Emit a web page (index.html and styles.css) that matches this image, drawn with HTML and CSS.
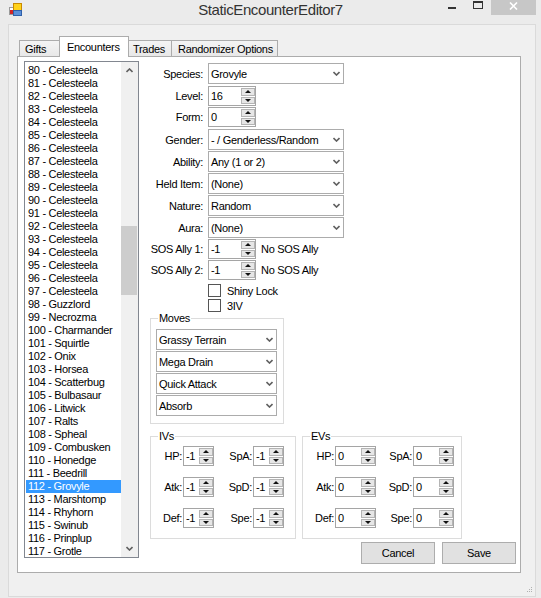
FILE: index.html
```html
<!DOCTYPE html>
<html lang="en">
<head>
  <meta charset="UTF-8">
  <title>StaticEncounterEditor7</title>
  <link rel="stylesheet" href="styles.css">
</head>
<body>
  <div class="titlebar">
    <div class="title-left">
      <svg class="app-icon" width="13" height="13" viewBox="0 0 13 13">
        <rect x="0.5" y="4.5" width="4" height="7" fill="#fff" stroke="#9a9a9a"/>
        <rect x="1" y="7" width="3" height="4" fill="#d42424"/>
        <rect x="4.5" y="0.5" width="8" height="7" fill="#ffd21a" stroke="#c98a00"/>
        <rect x="4.5" y="7.5" width="8" height="5" fill="#5b8fd8" stroke="#2f5fa8"/>
      </svg>
    </div>
    <div class="title">StaticEncounterEditor7</div>
    <div class="caption">
      <div class="cap-btn cap-min"><span class="min-glyph"></span></div>
      <div class="cap-btn cap-max"><span class="max-glyph"></span></div>
      <div class="cap-btn cap-close">
        <svg width="9" height="8" viewBox="0 0 9 8">
          <path d="M1 0.5 L8 7.5 M8 0.5 L1 7.5" stroke="#fff" stroke-width="1.6"/>
        </svg>
      </div>
    </div>
  </div>

  <div class="client">
    <div class="tabs">
      <div class="tab tab-gifts">Gifts</div>
      <div class="tab tab-encounters active">Encounters</div>
      <div class="tab tab-trades">Trades</div>
      <div class="tab tab-random">Randomizer Options</div>
    </div>

    <div class="tab-page">
      <div class="listbox">
        <div class="list-items">
          <div class="item">80 - Celesteela</div>
          <div class="item">81 - Celesteela</div>
          <div class="item">82 - Celesteela</div>
          <div class="item">83 - Celesteela</div>
          <div class="item">84 - Celesteela</div>
          <div class="item">85 - Celesteela</div>
          <div class="item">86 - Celesteela</div>
          <div class="item">87 - Celesteela</div>
          <div class="item">88 - Celesteela</div>
          <div class="item">89 - Celesteela</div>
          <div class="item">90 - Celesteela</div>
          <div class="item">91 - Celesteela</div>
          <div class="item">92 - Celesteela</div>
          <div class="item">93 - Celesteela</div>
          <div class="item">94 - Celesteela</div>
          <div class="item">95 - Celesteela</div>
          <div class="item">96 - Celesteela</div>
          <div class="item">97 - Celesteela</div>
          <div class="item">98 - Guzzlord</div>
          <div class="item">99 - Necrozma</div>
          <div class="item">100 - Charmander</div>
          <div class="item">101 - Squirtle</div>
          <div class="item">102 - Onix</div>
          <div class="item">103 - Horsea</div>
          <div class="item">104 - Scatterbug</div>
          <div class="item">105 - Bulbasaur</div>
          <div class="item">106 - Litwick</div>
          <div class="item">107 - Ralts</div>
          <div class="item">108 - Spheal</div>
          <div class="item">109 - Combusken</div>
          <div class="item">110 - Honedge</div>
          <div class="item">111 - Beedrill</div>
          <div class="item selected">112 - Grovyle</div>
          <div class="item">113 - Marshtomp</div>
          <div class="item">114 - Rhyhorn</div>
          <div class="item">115 - Swinub</div>
          <div class="item">116 - Prinplup</div>
          <div class="item">117 - Grotle</div>
        </div>
        <div class="scrollbar">
          <div class="scroll-arrow">
            <svg width="7" height="5" viewBox="0 0 7 5"><polyline points="0.5,4 3.5,1 6.5,4" fill="none" stroke="#606060" stroke-width="1.6"/></svg>
          </div>
          <div class="scroll-track"><div class="scroll-thumb"></div></div>
          <div class="scroll-arrow">
            <svg width="7" height="5" viewBox="0 0 7 5"><polyline points="0.5,1 3.5,4 6.5,1" fill="none" stroke="#606060" stroke-width="1.6"/></svg>
          </div>
        </div>
      </div>

      <div class="editor">
        <div class="field row-species">
          <div class="field-label">Species:</div>
          <div class="combo wide"><span>Grovyle</span><svg class="chev" width="7" height="5" viewBox="0 0 7 5"><polyline points="0.5,1 3.5,4 6.5,1" fill="none" stroke="#606060" stroke-width="1.6"/></svg></div>
        </div>
        <div class="field row-level">
          <div class="field-label">Level:</div>
          <div class="numeric num-form"><span class="num-text">16</span><div class="spin"><div class="spin-btn"><i class="up"></i></div><div class="spin-btn"><i class="down"></i></div></div></div>
        </div>
        <div class="field row-form">
          <div class="field-label">Form:</div>
          <div class="numeric num-form"><span class="num-text">0</span><div class="spin"><div class="spin-btn"><i class="up"></i></div><div class="spin-btn"><i class="down"></i></div></div></div>
        </div>
        <div class="field row-gender">
          <div class="field-label">Gender:</div>
          <div class="combo wide"><span>- / Genderless/Random</span><svg class="chev" width="7" height="5" viewBox="0 0 7 5"><polyline points="0.5,1 3.5,4 6.5,1" fill="none" stroke="#606060" stroke-width="1.6"/></svg></div>
        </div>
        <div class="field row-next">
          <div class="field-label">Ability:</div>
          <div class="combo wide"><span>Any (1 or 2)</span><svg class="chev" width="7" height="5" viewBox="0 0 7 5"><polyline points="0.5,1 3.5,4 6.5,1" fill="none" stroke="#606060" stroke-width="1.6"/></svg></div>
        </div>
        <div class="field row-next">
          <div class="field-label">Held Item:</div>
          <div class="combo wide"><span>(None)</span><svg class="chev" width="7" height="5" viewBox="0 0 7 5"><polyline points="0.5,1 3.5,4 6.5,1" fill="none" stroke="#606060" stroke-width="1.6"/></svg></div>
        </div>
        <div class="field row-next">
          <div class="field-label">Nature:</div>
          <div class="combo wide"><span>Random</span><svg class="chev" width="7" height="5" viewBox="0 0 7 5"><polyline points="0.5,1 3.5,4 6.5,1" fill="none" stroke="#606060" stroke-width="1.6"/></svg></div>
        </div>
        <div class="field row-next">
          <div class="field-label">Aura:</div>
          <div class="combo wide"><span>(None)</span><svg class="chev" width="7" height="5" viewBox="0 0 7 5"><polyline points="0.5,1 3.5,4 6.5,1" fill="none" stroke="#606060" stroke-width="1.6"/></svg></div>
        </div>
        <div class="field row-sos1">
          <div class="field-label">SOS Ally 1:</div>
          <div class="numeric num-form"><span class="num-text">-1</span><div class="spin"><div class="spin-btn"><i class="up"></i></div><div class="spin-btn"><i class="down"></i></div></div></div>
          <span class="sos-name">No SOS Ally</span>
        </div>
        <div class="field row-next">
          <div class="field-label">SOS Ally 2:</div>
          <div class="numeric num-form"><span class="num-text">-1</span><div class="spin"><div class="spin-btn"><i class="up"></i></div><div class="spin-btn"><i class="down"></i></div></div></div>
          <span class="sos-name">No SOS Ally</span>
        </div>
        <div class="check-row row-shiny"><span class="checkbox"></span><span class="check-text">Shiny Lock</span></div>
        <div class="check-row"><span class="checkbox"></span><span class="check-text">3IV</span></div>

        <fieldset class="group moves">
          <legend>Moves</legend>
          <div class="combo move"><span>Grassy Terrain</span><svg class="chev" width="7" height="5" viewBox="0 0 7 5"><polyline points="0.5,1 3.5,4 6.5,1" fill="none" stroke="#606060" stroke-width="1.6"/></svg></div>
          <div class="combo move"><span>Mega Drain</span><svg class="chev" width="7" height="5" viewBox="0 0 7 5"><polyline points="0.5,1 3.5,4 6.5,1" fill="none" stroke="#606060" stroke-width="1.6"/></svg></div>
          <div class="combo move"><span>Quick Attack</span><svg class="chev" width="7" height="5" viewBox="0 0 7 5"><polyline points="0.5,1 3.5,4 6.5,1" fill="none" stroke="#606060" stroke-width="1.6"/></svg></div>
          <div class="combo move"><span>Absorb</span><svg class="chev" width="7" height="5" viewBox="0 0 7 5"><polyline points="0.5,1 3.5,4 6.5,1" fill="none" stroke="#606060" stroke-width="1.6"/></svg></div>
        </fieldset>

        <div class="stats-row">
          <fieldset class="group ivs">
            <legend>IVs</legend>
            <div class="stat-grid iv-grid">
              <div class="stat-label">HP:</div>
              <div class="numeric"><span class="num-text">-1</span><div class="spin"><div class="spin-btn"><i class="up"></i></div><div class="spin-btn"><i class="down"></i></div></div></div>
              <div class="stat-label">SpA:</div>
              <div class="numeric"><span class="num-text">-1</span><div class="spin"><div class="spin-btn"><i class="up"></i></div><div class="spin-btn"><i class="down"></i></div></div></div>
              <div class="stat-label">Atk:</div>
              <div class="numeric"><span class="num-text">-1</span><div class="spin"><div class="spin-btn"><i class="up"></i></div><div class="spin-btn"><i class="down"></i></div></div></div>
              <div class="stat-label">SpD:</div>
              <div class="numeric"><span class="num-text">-1</span><div class="spin"><div class="spin-btn"><i class="up"></i></div><div class="spin-btn"><i class="down"></i></div></div></div>
              <div class="stat-label">Def:</div>
              <div class="numeric"><span class="num-text">-1</span><div class="spin"><div class="spin-btn"><i class="up"></i></div><div class="spin-btn"><i class="down"></i></div></div></div>
              <div class="stat-label">Spe:</div>
              <div class="numeric"><span class="num-text">-1</span><div class="spin"><div class="spin-btn"><i class="up"></i></div><div class="spin-btn"><i class="down"></i></div></div></div>
            </div>
          </fieldset>
          <fieldset class="group evs">
            <legend>EVs</legend>
            <div class="stat-grid ev-grid">
              <div class="stat-label">HP:</div>
              <div class="numeric"><span class="num-text">0</span><div class="spin"><div class="spin-btn"><i class="up"></i></div><div class="spin-btn"><i class="down"></i></div></div></div>
              <div class="stat-label">SpA:</div>
              <div class="numeric"><span class="num-text">0</span><div class="spin"><div class="spin-btn"><i class="up"></i></div><div class="spin-btn"><i class="down"></i></div></div></div>
              <div class="stat-label">Atk:</div>
              <div class="numeric"><span class="num-text">0</span><div class="spin"><div class="spin-btn"><i class="up"></i></div><div class="spin-btn"><i class="down"></i></div></div></div>
              <div class="stat-label">SpD:</div>
              <div class="numeric"><span class="num-text">0</span><div class="spin"><div class="spin-btn"><i class="up"></i></div><div class="spin-btn"><i class="down"></i></div></div></div>
              <div class="stat-label">Def:</div>
              <div class="numeric"><span class="num-text">0</span><div class="spin"><div class="spin-btn"><i class="up"></i></div><div class="spin-btn"><i class="down"></i></div></div></div>
              <div class="stat-label">Spe:</div>
              <div class="numeric"><span class="num-text">0</span><div class="spin"><div class="spin-btn"><i class="up"></i></div><div class="spin-btn"><i class="down"></i></div></div></div>
            </div>
          </fieldset>
        </div>

        <div class="actions">
          <button class="win-btn">Cancel</button>
          <button class="win-btn">Save</button>
        </div>
      </div>
    </div>

    <div class="statusbar">
      <svg class="grip" width="7" height="7" viewBox="0 0 7 7">
        <rect x="5" y="0" width="1" height="1" fill="#b0b0b0"/>
        <rect x="3" y="2" width="1" height="1" fill="#b0b0b0"/>
        <rect x="5" y="2" width="1" height="1" fill="#b0b0b0"/>
        <rect x="1" y="4" width="1" height="1" fill="#b0b0b0"/>
        <rect x="3" y="4" width="1" height="1" fill="#b0b0b0"/>
        <rect x="5" y="4" width="1" height="1" fill="#b0b0b0"/>
      </svg>
    </div>
  </div>
</body>
</html>
```

FILE: styles.css
```css
* {
  box-sizing: border-box;
}
body {
  margin: 0;
  width: 541px;
  height: 598px;
  overflow: hidden;
  background-color: #ebebeb;
  font-family: "Liberation Sans", Arial, sans-serif;
  font-size: 11px;
  letter-spacing: -0.3px;
  color: #000;
}

/* window title bar */
.titlebar {
  height: 24px;
  display: grid;
  grid-template-columns: 1fr auto 1fr;
}
.app-icon {
  display: block;
  margin: 3px 0 0 9px;
}
.title {
  font-size: 15px;
  letter-spacing: -0.4px;
  line-height: 20px;
  color: #333;
}
.caption {
  display: flex;
  justify-content: flex-end;
  align-items: flex-start;
  padding-right: 5px;
}
.cap-btn {
  width: 26px;
  height: 16px;
  display: flex;
  justify-content: center;
  align-items: flex-start;
}
.min-glyph {
  width: 8px;
  height: 2px;
  margin-top: 7px;
  background: #333;
}
.max-glyph {
  width: 10px;
  height: 8px;
  margin-top: 1px;
  border: 1px solid #333;
  border-top-width: 2px;
}
.cap-close {
  width: 45px;
  height: 15px;
  background: #c7c7c7;
  padding-top: 2px;
}

/* client area */
.client {
  margin-left: 8px;
  width: 528px;
  height: 573px;
  background: #f0f0f0;
  border: 1px solid #dadada;
  padding: 11px 0 0 8px;
}
.tabs {
  display: flex;
  align-items: flex-end;
  height: 20px;
  margin-left: 2px;
}
.tab {
  height: 16px;
  border: 1px solid #acacac;
  border-bottom: none;
  background: linear-gradient(#f4f4f4, #e8e8e8);
  padding-top: 2px;
  line-height: 13px;
  margin-right: -1px;
  white-space: nowrap;
}
.tab-gifts {
  width: 41px;
  padding-left: 5px;
}
.tab-encounters {
  width: 70px;
  padding-left: 7px;
}
.tab-trades {
  width: 44px;
  padding-left: 4px;
}
.tab-random {
  width: 107px;
  padding-left: 6px;
}
.tab.active {
  height: 21px;
  margin-bottom: -1px;
  padding-top: 4px;
  background: #fff;
  position: relative;
  z-index: 1;
}
.tab-page {
  width: 504px;
  height: 517px;
  border: 1px solid #acacac;
  background: #fff;
  display: flex;
}

/* species list */
.listbox {
  margin: 4px 0 0 6px;
  width: 115px;
  height: 497px;
  border: 1px solid #828790;
  display: flex;
}
.list-items {
  flex: 1;
  padding-top: 2px;
  overflow: hidden;
}
.item {
  height: 13px;
  line-height: 13px;
  margin-left: 1px;
  padding-left: 2px;
  white-space: nowrap;
}
.item.selected {
  background: #3399ff;
  color: #fff;
}
.scrollbar {
  width: 17px;
  background: #f0f0f0;
  display: flex;
  flex-direction: column;
}
.scroll-arrow {
  height: 17px;
  display: flex;
  justify-content: center;
  align-items: center;
}
.scroll-track {
  flex: 1;
}
.scroll-thumb {
  margin: 147px 0 0 0;
  width: 16px;
  height: 69px;
  background: #cdcdcd;
}

/* editor fields */
.editor {
  flex: 1;
  display: flex;
  flex-direction: column;
}
.field {
  display: flex;
  align-items: center;
}
.row-species {
  margin-top: 6px;
}
.row-level,
.row-gender {
  margin-top: 2px;
}
.row-form,
.row-next {
  margin-top: 1px;
}
.row-sos1 {
  margin-top: 1px;
}
.field-label {
  width: 64px;
  margin-right: 5px;
  text-align: right;
  white-space: nowrap;
}
.combo {
  height: 21px;
  display: flex;
  align-items: center;
  justify-content: space-between;
  border: 1px solid #acacac;
  background: #fff;
  padding: 0 3px 0 2px;
  white-space: nowrap;
}
.combo.wide {
  width: 136px;
}
.chev {
  display: block;
}
.numeric {
  height: 20px;
  display: flex;
  border: 1px solid #a5a5a5;
  background: #fff;
}
.num-form {
  width: 48px;
}
.num-text {
  flex: 1;
  padding-left: 2px;
  line-height: 18px;
}
.spin {
  width: 14px;
  margin: 1px 0 1px 0;
  display: flex;
  flex-direction: column;
  gap: 1px;
}
.spin-btn {
  flex: 1;
  background: #e6e6e6;
  border: 1px solid #b4b4b4;
  display: flex;
  justify-content: center;
  align-items: center;
}
.spin-btn i {
  width: 0;
  height: 0;
  border-left: 3px solid transparent;
  border-right: 3px solid transparent;
}
.spin-btn .up {
  border-bottom: 3px solid #111;
}
.spin-btn .down {
  border-top: 3px solid #111;
}
.sos-name {
  margin-left: 5px;
  white-space: nowrap;
}
.check-row {
  height: 15px;
  margin-left: 69px;
  display: flex;
  align-items: center;
}
.row-shiny {
  margin-top: 3px;
}
.checkbox {
  width: 13px;
  height: 13px;
  border: 1px solid #555;
  background: #fff;
}
.check-text {
  margin-left: 6px;
  padding-top: 1px;
}

/* group boxes */
.group {
  margin: 0;
  border: 1px solid #dcdcdc;
  min-width: 0;
}
.group legend {
  padding: 0 1px;
  margin-left: 2px;
  line-height: 13px;
}
.moves {
  margin: -1px 0 0 11px;
  width: 134px;
  padding: 4px 6px 6px 5px;
}
.combo.move {
  width: 121px;
  margin-bottom: 1px;
}
.stats-row {
  display: flex;
  gap: 6px;
  margin: 6px 0 0 11px;
}
.ivs {
  width: 146px;
  padding: 3px 5px 10px 5px;
}
.evs {
  width: 160px;
  padding: 3px 7px 10px 5px;
}
.stat-grid {
  display: grid;
  grid-auto-rows: 20px;
  row-gap: 11px;
  align-items: center;
}
.iv-grid {
  grid-template-columns: 27px 31px 39px 31px;
}
.ev-grid {
  grid-template-columns: 27px 41px 37px 41px;
}
.stat-label {
  text-align: right;
  padding-right: 1px;
}

/* buttons */
.actions {
  display: flex;
  justify-content: flex-end;
  gap: 7px;
  margin-top: 3px;
  padding-right: 4px;
}
.win-btn {
  width: 74px;
  height: 22px;
  border: 1px solid #adadad;
  background: #e1e1e1;
  font-family: "Liberation Sans", Arial, sans-serif;
  font-size: 11px;
  letter-spacing: -0.3px;
  color: #000;
  padding: 0;
}

.statusbar {
  display: flex;
  justify-content: flex-end;
  padding: 14px 2px 0 0;
}
.grip {
  display: block;
}
```
